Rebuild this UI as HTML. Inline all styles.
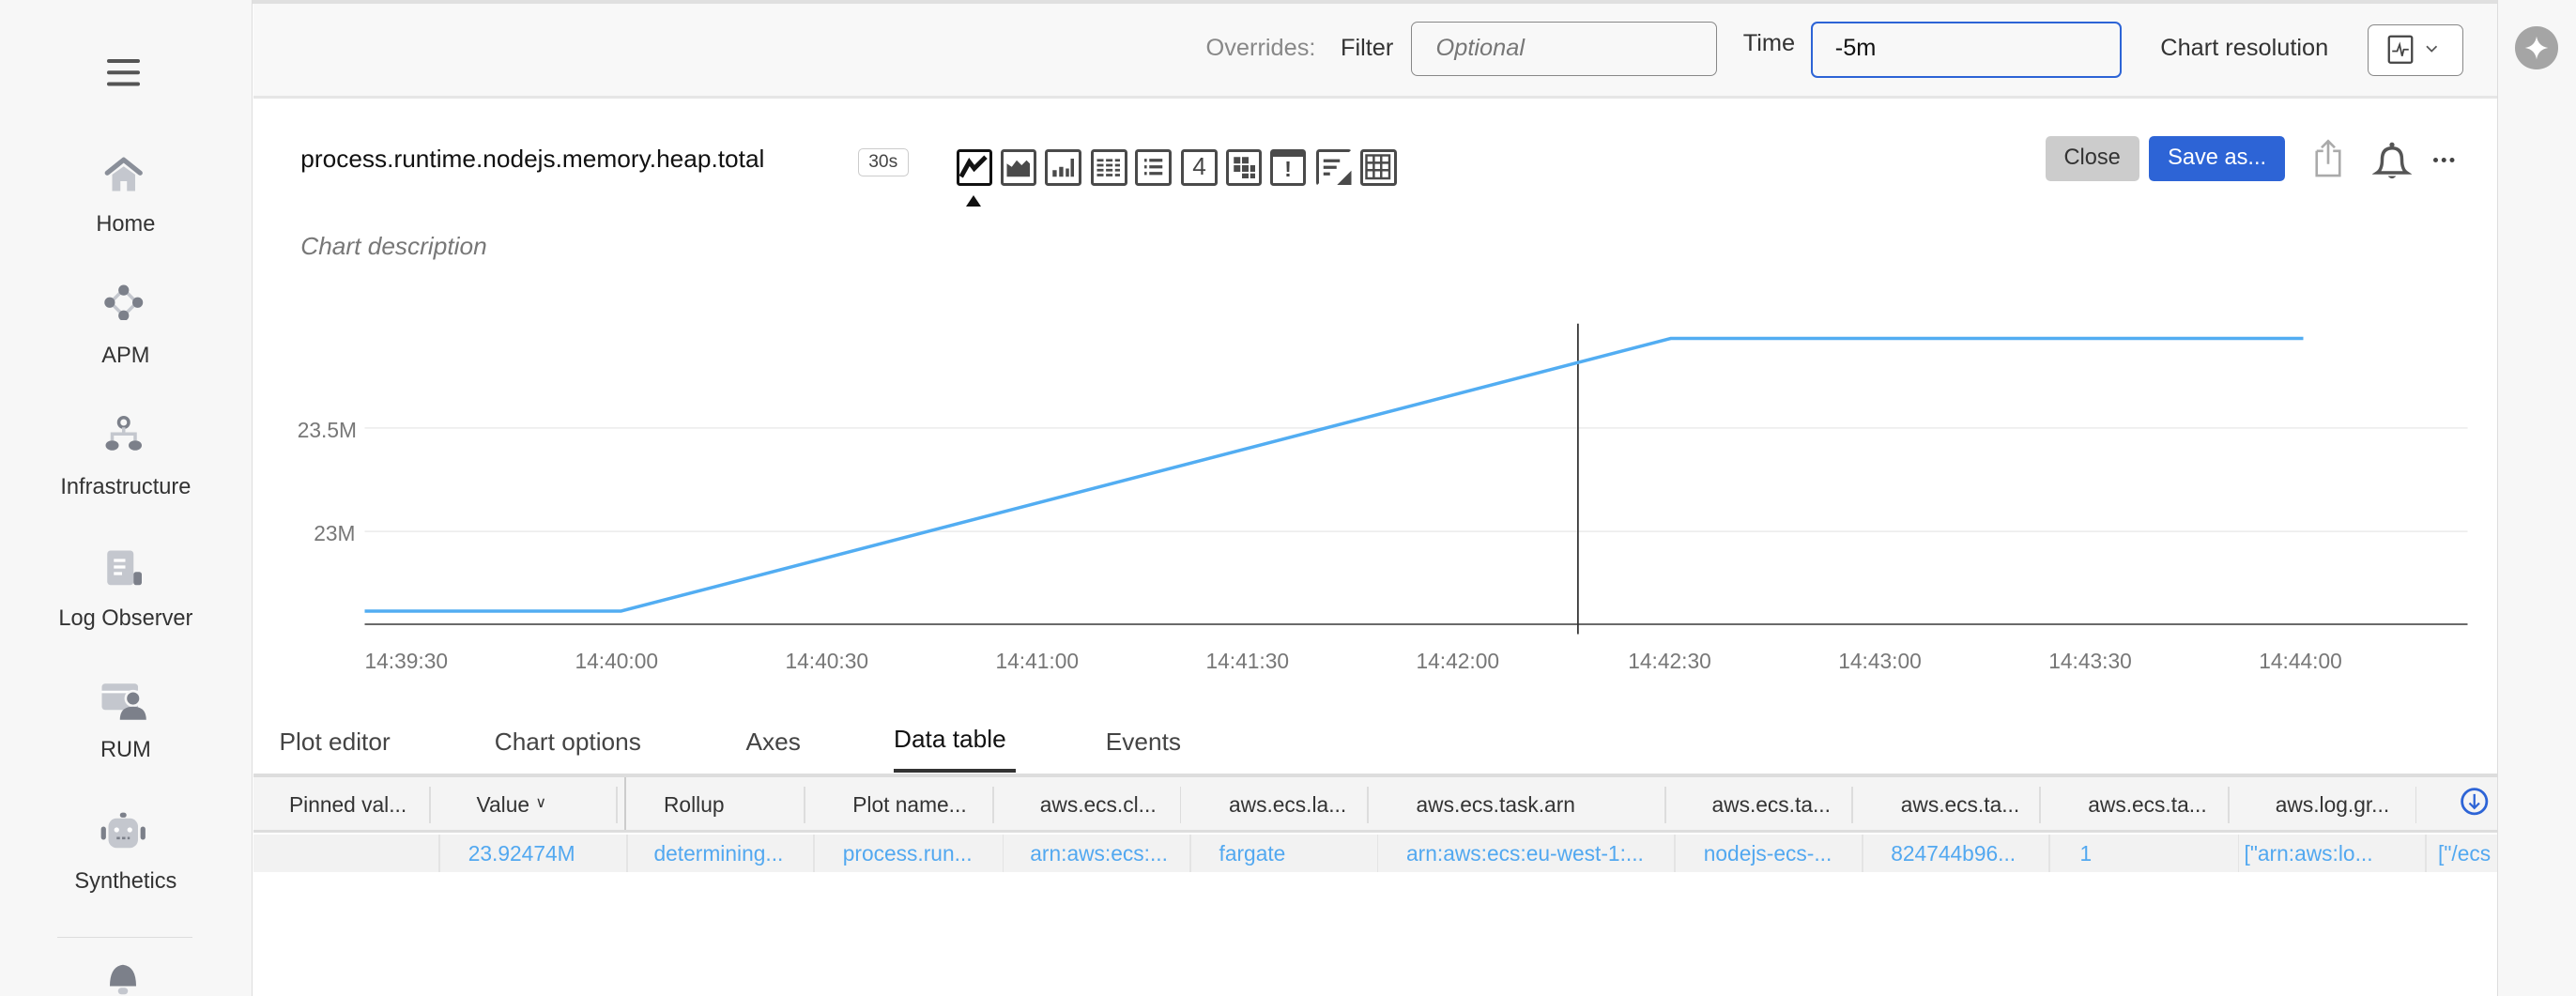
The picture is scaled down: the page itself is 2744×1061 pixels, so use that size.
<!DOCTYPE html>
<html><head><meta charset="utf-8">
<style>
html,body{margin:0;padding:0;}
body{width:2744px;height:1060px;overflow:hidden;background:#fff;font-family:"Liberation Sans",sans-serif;}
#r{zoom:1.75;width:1568px;height:606px;position:relative;overflow:hidden;color:#222;}
.a{position:absolute;white-space:nowrap;}
.side{left:0;top:0;width:153px;height:606px;background:#f7f7f7;border-right:1px solid #ddd;}
.nav{width:153px;text-align:center;font-size:13.5px;color:#333;}
.hdr{left:154px;top:2px;width:1366px;height:56px;background:#f8f8f8;border-bottom:2px solid #e6e6e6;}
.rp{left:1520px;top:0;width:48px;height:606px;background:#f7f7f7;border-left:1px solid #ddd;}
.inp{border:1px solid #888;border-radius:4px;background:#f8f8f8;}
.ico{width:22px;height:22px;border:2px solid #4a4a4a;border-radius:2px;box-sizing:border-box;}
.th{font-size:13px;color:#333;top:482px;}
.td{font-size:13px;color:#52a8f0;top:512px;}
.sep{width:1px;background:#ddd;}
.xl{font-size:13px;color:#777;top:395px;}
</style></head><body><div id="r">
<div class="a" style="left:0;top:0;width:1568px;height:2px;background:#e0e0e0"></div>
<div class="a side"></div>
<div class="a" style="left:65px;top:36px;width:20px;height:2.5px;background:#555;border-radius:2px;box-shadow:0 7px 0 #555,0 14px 0 #555"></div>
<svg class="a" style="left:62px;top:94px" width="26" height="24" viewBox="0 0 26 24"><path d="M3 11 L13 3 L23 11" fill="none" stroke="#8a8f99" stroke-width="3" stroke-linecap="round" stroke-linejoin="round"/><path d="M6 12 L13 7 L20 12 V22 H15 V16 H11 V22 H6Z" fill="#c4c7ce"/></svg>
<div class="a nav" style="top:129px">Home</div>
<svg class="a" style="left:62px;top:173px" width="26" height="22" viewBox="0 0 26 22"><path d="M13 3 L21 11 L13 19 L5 11Z" fill="none" stroke="#c4c7ce" stroke-width="2"/><circle cx="13" cy="3.5" r="3.2" fill="#7c808a"/><circle cx="4.5" cy="11" r="3.2" fill="#7c808a"/><circle cx="21.5" cy="11" r="3.2" fill="#7c808a"/><circle cx="13" cy="19" r="3.2" fill="#7c808a"/></svg>
<div class="a nav" style="top:209px">APM</div>
<svg class="a" style="left:62px;top:253px" width="26" height="24" viewBox="0 0 26 24"><circle cx="13" cy="4" r="3" fill="none" stroke="#7c808a" stroke-width="2"/><path d="M13 7 V11 M6 15 V11 H20 V15" fill="none" stroke="#c4c7ce" stroke-width="2"/><ellipse cx="6" cy="18" rx="4" ry="3" fill="#7c808a"/><ellipse cx="20" cy="18" rx="4" ry="3" fill="#7c808a"/></svg>
<div class="a nav" style="top:289px">Infrastructure</div>
<svg class="a" style="left:62px;top:333px" width="26" height="26" viewBox="0 0 26 26"><rect x="3" y="2" width="16" height="21" rx="2" fill="#c4c7ce"/><path d="M7 8 H14 M7 12 H14 M7 16 H12" stroke="#fff" stroke-width="1.8"/><rect x="19" y="15" width="5" height="8" rx="1.5" fill="#7c808a"/></svg>
<div class="a nav" style="top:369px">Log Observer</div>
<svg class="a" style="left:60px;top:413px" width="30" height="26" viewBox="0 0 30 26"><rect x="2" y="3" width="22" height="16" rx="2" fill="#c4c7ce"/><path d="M2 8 H24" stroke="#fff" stroke-width="1.5"/><circle cx="21" cy="12" r="4.5" fill="#7c808a" stroke="#f7f7f7" stroke-width="1.5"/><path d="M13 25 Q13 17 21 17 Q29 17 29 25Z" fill="#7c808a"/></svg>
<div class="a nav" style="top:449px">RUM</div>
<svg class="a" style="left:60px;top:493px" width="30" height="26" viewBox="0 0 30 26"><rect x="13" y="1.5" width="4" height="3" rx="1.5" fill="#7c808a"/><rect x="6" y="5" width="18" height="18" rx="5" fill="#c4c7ce"/><rect x="1.5" y="10" width="3" height="8" rx="1.5" fill="#7c808a"/><rect x="25.5" y="10" width="3" height="8" rx="1.5" fill="#7c808a"/><circle cx="11" cy="12" r="1.5" fill="#fff"/><circle cx="19" cy="12" r="1.5" fill="#fff"/><path d="M11 17 H19" stroke="#7c808a" stroke-width="1.5" stroke-dasharray="2 1.3"/></svg>
<div class="a nav" style="top:529px">Synthetics</div>
<div class="a" style="left:35px;top:570px;width:82px;height:1px;background:#ddd"></div>
<svg class="a" style="left:63px;top:582px" width="24" height="24" viewBox="0 0 24 24"><path d="M4 18 Q4 6 12 5 Q20 6 20 18Z" fill="#7c808a"/><rect x="9" y="19" width="6" height="4" rx="2" fill="#c4c7ce"/></svg>

<div class="a hdr"></div>
<div class="a" style="left:734px;top:21px;font-size:14.5px;color:#888">Overrides:</div>
<div class="a" style="left:816px;top:21px;font-size:14.5px;color:#333">Filter</div>
<div class="a inp" style="left:859px;top:13px;width:185px;height:32px"></div>
<div class="a" style="left:874px;top:21px;font-size:14.5px;color:#777;font-style:italic">Optional</div>
<div class="a" style="left:1061px;top:18px;font-size:14.5px;color:#333">Time</div>
<div class="a" style="left:1102px;top:13px;width:187px;height:32px;border:1.5px solid #2d64d6;border-radius:4px;background:#f8f8f8"></div>
<div class="a" style="left:1117px;top:21px;font-size:14.5px;color:#111">-5m</div>
<div class="a" style="left:1315px;top:21px;font-size:14.5px;color:#333">Chart resolution</div>
<div class="a inp" style="left:1441px;top:15px;width:57px;height:30px;background:#fff"></div>
<svg class="a" style="left:1453px;top:21px" width="36" height="18" viewBox="0 0 36 18"><rect x="1" y="1" width="14" height="16" rx="1" fill="none" stroke="#444" stroke-width="1.3"/><path d="M3 10 H6 L7.5 6 L9 13 L10 9 H13" fill="none" stroke="#444" stroke-width="1"/><path d="M24 7 L27 10 L30 7" fill="none" stroke="#555" stroke-width="1"/></svg>
<div class="a rp"></div>
<div class="a" style="left:1531px;top:16px;width:26px;height:26px;border-radius:50%;background:#a5a5a5"></div>
<svg class="a" style="left:1536px;top:21px" width="16" height="16" viewBox="0 0 16 16"><path d="M8 1 Q9 7 15 8 Q9 9 8 15 Q7 9 1 8 Q7 7 8 1Z" fill="#fff"/></svg>

<div class="a" style="left:183px;top:88px;font-size:15px;color:#111">process.runtime.nodejs.memory.heap.total</div>
<div class="a" style="left:522px;top:90px;width:30px;height:16px;border:1px solid #ccc;border-radius:3px;font-size:11px;color:#444;text-align:center;line-height:16px">30s</div>
<div class="a ico" style="left:582px;top:91px;border-color:#111"><svg width="18" height="18" viewBox="0 0 18 18"><path d="M1 15 L6 6 L9 10 L16 3" fill="none" stroke="#111" stroke-width="2.8"/></svg></div>
<div class="a" style="left:588px;top:119px;width:0;height:0;border-left:5px solid transparent;border-right:5px solid transparent;border-bottom:7px solid #111"></div>
<div class="a ico" style="left:609px;top:91px"><svg width="18" height="18" viewBox="0 0 18 18"><path d="M2 15 V7 L5 9 L8 5 L11 8 L14 5 L16 7 V15Z" fill="#4a4a4a"/></svg></div>
<div class="a ico" style="left:636px;top:91px"><svg width="18" height="18" viewBox="0 0 18 18"><path d="M3 15 V11 H5.5 V15 M7 15 V9 H9.5 V15 M11 15 V10 H13 V15 M14 15 V4 H16 V15" fill="#4a4a4a"/></svg></div>
<div class="a ico" style="left:664px;top:91px"><svg width="18" height="18" viewBox="0 0 18 18"><path d="M2 5 H16 M2 8 H16 M2 11 H16 M2 14 H16" stroke="#4a4a4a" stroke-width="1.6" stroke-dasharray="4 1.5"/></svg></div>
<div class="a ico" style="left:691px;top:91px"><svg width="18" height="18" viewBox="0 0 18 18"><path d="M4 5 H5.5 M4 9 H5.5 M4 13 H5.5 M7 5 H15 M7 9 H15 M7 13 H15" stroke="#4a4a4a" stroke-width="1.8"/></svg></div>
<div class="a ico" style="left:719px;top:91px;font-size:15px;text-align:center;line-height:18px;color:#444">4</div>
<div class="a ico" style="left:746px;top:91px"><svg width="18" height="18" viewBox="0 0 18 18"><path d="M3 3h4v4h-4zM8 3h4v4h-4zM3 8h4v4h-4zM8 8h4v4h-4zM13 8h3v4h-3zM8 13h4v3h-4zM13 13h3v3h-3z" fill="#4a4a4a"/></svg></div>
<div class="a ico" style="left:773px;top:91px;border-top:5px solid #4a4a4a;font-size:13px;font-weight:bold;text-align:center;line-height:15px;color:#444">!</div>
<div class="a ico" style="left:801px;top:91px;border-right-color:transparent;border-bottom-color:transparent"><svg width="22" height="22" viewBox="0 0 22 22" style="position:absolute;left:-2px;top:-2px"><path d="M22 13 V22 H13Z" fill="#4a4a4a"/><path d="M5 7 H15 M5 11 H13 M5 15 H9" stroke="#4a4a4a" stroke-width="1.8"/></svg></div>
<div class="a ico" style="left:828px;top:91px"><svg width="18" height="18" viewBox="0 0 18 18"><rect x="2" y="2" width="14" height="14" fill="none" stroke="#4a4a4a" stroke-width="1.4"/><path d="M2 6.5 H16 M2 11 H16 M6.5 2 V16 M11 2 V16" stroke="#4a4a4a" stroke-width="1.4"/></svg></div>

<div class="a" style="left:1245px;top:83px;width:57px;height:27px;background:#ccc;border-radius:3px;font-size:13.5px;color:#333;text-align:center;line-height:27px">Close</div>
<div class="a" style="left:1308px;top:83px;width:83px;height:27px;background:#2d64d6;border-radius:3px;font-size:13.5px;color:#fff;text-align:center;line-height:27px">Save as...</div>
<svg class="a" style="left:1405px;top:83px" width="24" height="26" viewBox="0 0 24 26"><path d="M5 9 V24 H19 V9 H15 M9 9 H5" fill="none" stroke="#aaa" stroke-width="1.5"/><path d="M12 17 V3 M8 7 L12 3 L16 7" fill="none" stroke="#aaa" stroke-width="1.5"/></svg>
<svg class="a" style="left:1444px;top:85px" width="24" height="26" viewBox="0 0 24 26"><path d="M3 20 Q6 18 6 12 Q6 5 12 5 Q18 5 18 12 Q18 18 21 20Z" fill="none" stroke="#555" stroke-width="2"/><circle cx="12" cy="3" r="1.5" fill="#555"/><path d="M9.5 22 Q12 25 14.5 22Z" fill="#555"/></svg>
<div class="a" style="left:1481px;top:96px;width:3px;height:3px;border-radius:50%;background:#444;box-shadow:5px 0 0 #444,10px 0 0 #444"></div>

<div class="a" style="left:183px;top:141px;font-size:15px;color:#777;font-style:italic">Chart description</div>

<svg class="a" style="left:0;top:0" width="1568" height="440">
<path d="M222 260.5 H1502 M222 323.5 H1502" stroke="#eee" stroke-width="1"/>
<path d="M222 380 H1502" stroke="#555" stroke-width="1"/>
<path d="M960.5 197 V386" stroke="#333" stroke-width="1"/>
<path d="M222 372 L378 372 L1017 206 L1402 206" fill="none" stroke="#52adf2" stroke-width="2"/>
</svg>
<div class="a" style="left:181px;top:254px;font-size:13px;color:#777">23.5M</div>
<div class="a" style="left:191px;top:317px;font-size:13px;color:#777">23M</div>
<div class="a xl" style="left:222px">14:39:30</div>
<div class="a xl" style="left:350px">14:40:00</div>
<div class="a xl" style="left:478px">14:40:30</div>
<div class="a xl" style="left:606px">14:41:00</div>
<div class="a xl" style="left:734px">14:41:30</div>
<div class="a xl" style="left:862px">14:42:00</div>
<div class="a xl" style="left:991px">14:42:30</div>
<div class="a xl" style="left:1119px">14:43:00</div>
<div class="a xl" style="left:1247px">14:43:30</div>
<div class="a xl" style="left:1375px">14:44:00</div>

<div class="a" style="left:170px;top:443px;font-size:15px;color:#444">Plot editor</div>
<div class="a" style="left:301px;top:443px;font-size:15px;color:#444">Chart options</div>
<div class="a" style="left:454px;top:443px;font-size:15px;color:#444">Axes</div>
<div class="a" style="left:544px;top:441px;font-size:15px;color:#111">Data table</div>
<div class="a" style="left:544px;top:468px;width:74px;height:2px;background:#333"></div>
<div class="a" style="left:673px;top:443px;font-size:15px;color:#444">Events</div>

<div class="a" style="left:154px;top:471px;width:1366px;height:2px;background:#ddd"></div>
<div class="a" style="left:154px;top:473px;width:1366px;height:32px;background:#f4f4f4"></div>
<div class="a" style="left:154px;top:505px;width:1366px;height:2px;background:#ddd"></div>
<div class="a" style="left:154px;top:508px;width:1366px;height:23px;background:#f2f2f2"></div>
<div class="a sep" style="left:261px;top:479px;height:22px"></div>
<div class="a sep" style="left:375px;top:479px;height:22px"></div>
<div class="a" style="left:380px;top:473px;width:1px;height:32px;background:#ccc"></div>
<div class="a sep" style="left:489px;top:479px;height:22px"></div>
<div class="a sep" style="left:604px;top:479px;height:22px"></div>
<div class="a sep" style="left:718px;top:479px;height:22px"></div>
<div class="a sep" style="left:832px;top:479px;height:22px"></div>
<div class="a sep" style="left:1013px;top:479px;height:22px"></div>
<div class="a sep" style="left:1127px;top:479px;height:22px"></div>
<div class="a sep" style="left:1241px;top:479px;height:22px"></div>
<div class="a sep" style="left:1356px;top:479px;height:22px"></div>
<div class="a sep" style="left:1470px;top:479px;height:22px"></div>
<div class="a th" style="left:176px">Pinned val...</div>
<div class="a th" style="left:290px">Value <span style="font-size:9px;vertical-align:3px">&#8744;</span></div>
<div class="a th" style="left:404px">Rollup</div>
<div class="a th" style="left:519px">Plot name...</div>
<div class="a th" style="left:633px">aws.ecs.cl...</div>
<div class="a th" style="left:748px">aws.ecs.la...</div>
<div class="a th" style="left:862px">aws.ecs.task.arn</div>
<div class="a th" style="left:1042px">aws.ecs.ta...</div>
<div class="a th" style="left:1157px">aws.ecs.ta...</div>
<div class="a th" style="left:1271px">aws.ecs.ta...</div>
<div class="a th" style="left:1385px">aws.log.gr...</div>
<svg class="a" style="left:1497px;top:479px" width="18" height="18" viewBox="0 0 18 18"><circle cx="9" cy="9" r="7.5" fill="none" stroke="#2d64d6" stroke-width="1.6"/><path d="M9 4.5 V13 M6 10 L9 13 L12 10" fill="none" stroke="#2d64d6" stroke-width="1.3"/></svg>
<div class="a sep" style="left:267px;top:508px;height:23px;background:#e4e4e4"></div>
<div class="a sep" style="left:381px;top:508px;height:23px;background:#e4e4e4"></div>
<div class="a sep" style="left:495px;top:508px;height:23px;background:#e4e4e4"></div>
<div class="a sep" style="left:610px;top:508px;height:23px;background:#e4e4e4"></div>
<div class="a sep" style="left:724px;top:508px;height:23px;background:#e4e4e4"></div>
<div class="a sep" style="left:838px;top:508px;height:23px;background:#e4e4e4"></div>
<div class="a sep" style="left:1019px;top:508px;height:23px;background:#e4e4e4"></div>
<div class="a sep" style="left:1133px;top:508px;height:23px;background:#e4e4e4"></div>
<div class="a sep" style="left:1247px;top:508px;height:23px;background:#e4e4e4"></div>
<div class="a sep" style="left:1362px;top:508px;height:23px;background:#e4e4e4"></div>
<div class="a sep" style="left:1476px;top:508px;height:23px;background:#e4e4e4"></div>
<div class="a td" style="left:285px">23.92474M</div>
<div class="a td" style="left:398px">determining...</div>
<div class="a td" style="left:513px">process.run...</div>
<div class="a td" style="left:627px">arn:aws:ecs:...</div>
<div class="a td" style="left:742px">fargate</div>
<div class="a td" style="left:856px">arn:aws:ecs:eu-west-1:...</div>
<div class="a td" style="left:1037px">nodejs-ecs-...</div>
<div class="a td" style="left:1151px">824744b96...</div>
<div class="a td" style="left:1266px">1</div>
<div class="a td" style="left:1366px">["arn:aws:lo...</div>
<div class="a td" style="left:1484px;width:36px;overflow:hidden">["/ecs</div>
</div></body></html>
